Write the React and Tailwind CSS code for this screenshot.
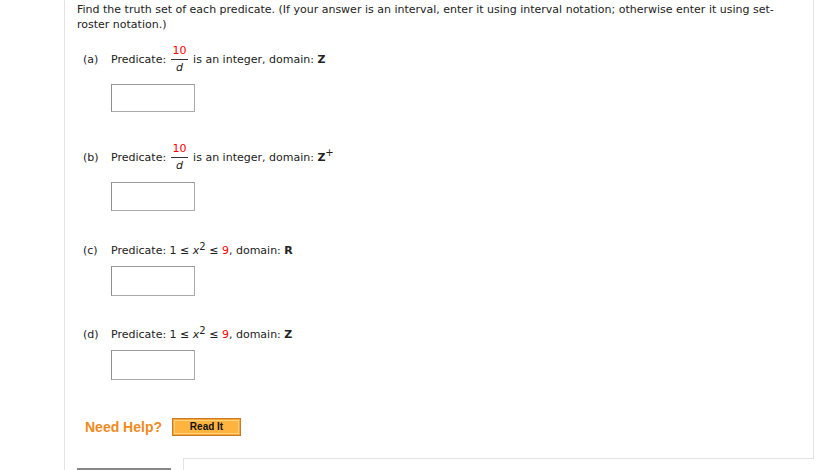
import React from "react";

const font = "font-['DejaVu_Sans',Verdana,sans-serif]";

function Frac() {
  return (
    <span className="ml-[5px] mr-[5px] inline-flex flex-col items-center align-middle">
      <span className="mb-[2px] leading-[12px] text-[#ff0000]">10</span>
      <span className="h-px w-[17px] bg-[#333]" />
      <span className="mt-[2px] italic leading-[12px]">d</span>
    </span>
  );
}

function AnswerBox({ className = "" }) {
  return (
    <input
      type="text"
      className={`ml-[34px] block w-[84px] border border-[#aaa] border-l-[#8f8f8f] border-t-[#999] bg-white outline-none ${className}`}
    />
  );
}

function Row({ label, children, className = "" }) {
  return (
    <div className={`flex items-center ${className}`}>
      <span className="ml-[6px] w-[28px]">{label}</span>
      <span className="flex items-center whitespace-nowrap">{children}</span>
    </div>
  );
}

export default function App() {
  return (
    <div className={`min-h-[470px] bg-white text-[11px] leading-[15px] text-[#222] ${font}`}>
      <div className="ml-[64px] w-[750px]">
        <div className="h-[458px] border-x border-[#e3e3e3] pl-[12px] pr-[20px] pt-[2px]">
          <p>
            Find the truth set of each predicate. (If your answer is an interval, enter it using interval notation; otherwise
            enter it using set-roster notation.)
          </p>

          <Row label="(a)" className="mt-[12px] h-[30px]">
            Predicate:
            <Frac />
            is an integer, domain:&nbsp;<b>Z</b>
          </Row>
          <AnswerBox className="mt-[10px] h-[28px]" />

          <Row label="(b)" className="mt-[30px] h-[30px]">
            Predicate:
            <Frac />
            is an integer, domain:&nbsp;
            <b>Z</b>
            <sup className="relative -top-[4px] text-[10px]">+</sup>
          </Row>
          <AnswerBox className="mt-[10px] h-[29px]" />

          <Row label="(c)" className="mt-[31px] h-[16px]">
            Predicate: 1 ≤&nbsp;<i>x</i>
            <sup className="relative -top-[3px] text-[10px]">2</sup>&nbsp;≤&nbsp;
            <span className="text-[#ff0000]">9</span>, domain:&nbsp;<b>R</b>
          </Row>
          <AnswerBox className="mt-[8px] h-[30px]" />

          <Row label="(d)" className="mt-[30px] h-[16px]">
            Predicate: 1 ≤&nbsp;<i>x</i>
            <sup className="relative -top-[3px] text-[10px]">2</sup>&nbsp;≤&nbsp;
            <span className="text-[#ff0000]">9</span>, domain:&nbsp;<b>Z</b>
          </Row>
          <AnswerBox className="mt-[8px] h-[30px]" />

          <div className="ml-[8px] mt-[38px] flex items-center gap-[10px]">
            <span className="font-['Liberation_Sans',Arial,sans-serif] text-[14px] font-bold leading-[18px] text-[#ef8a1d]">
              Need Help?
            </span>
            <button className="h-[18px] w-[69px] border border-[#c87a25] bg-[#f8a53a] p-px">
              <span className="flex h-full items-center justify-center border border-[#ffd27a] bg-[#ffb43f] font-['Liberation_Sans',Arial,sans-serif] text-[10px] font-bold leading-none text-[#111]">
                Read It
              </span>
            </button>
          </div>
        </div>
        <div className="flex h-[12px]">
          <div className="w-[119px] border-l border-[#e3e3e3] pl-[12px] pt-[10px]">
            <div className="h-[2px] w-[94px] bg-[#888]" />
          </div>
          <div className="flex-1 border-l border-t border-[#e3e3e3]" />
        </div>
      </div>
    </div>
  );
}
